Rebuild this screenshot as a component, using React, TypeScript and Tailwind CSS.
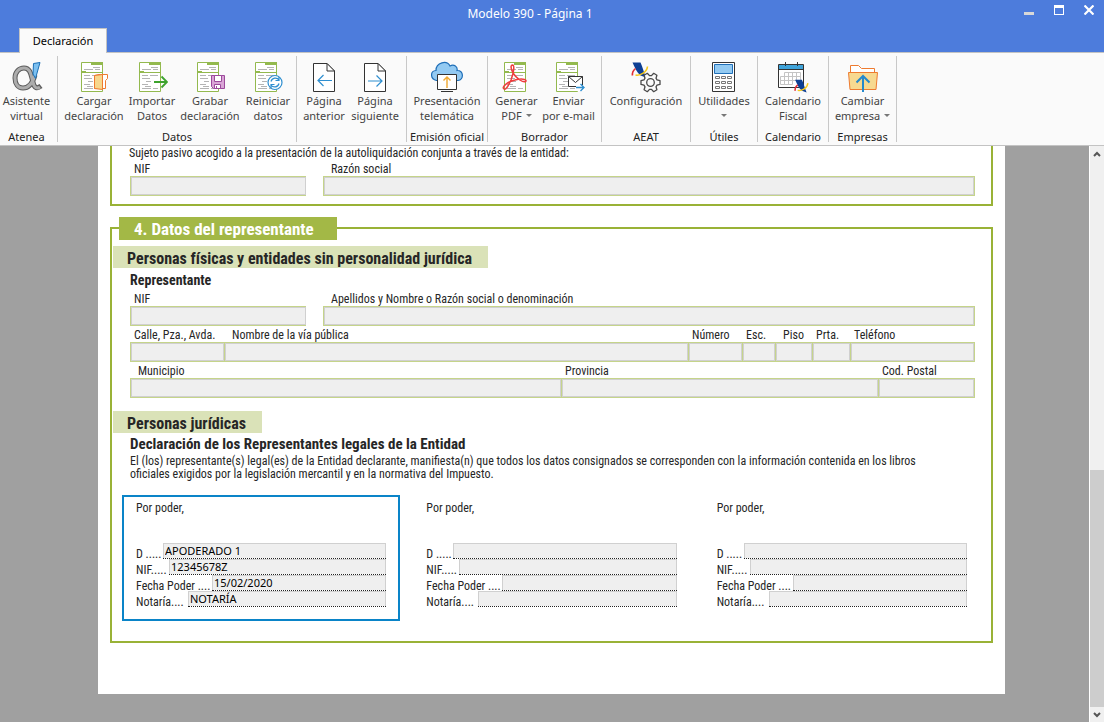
import type { ReactNode } from 'react';

function SheetIcon({ children }: { children?: ReactNode }) {
  return (
    <svg viewBox="0 0 32 32" className="w-8 h-8" fill="none">
      <path d="M3.5 1.5h21v29h-21z" fill="#fff" stroke="#93b94e" />
      <path d="M13 1h12v3H13zM3 10h5v2H3zM3 11h22v1H3z" fill="#93b94e" />
      <path
        d="M15 6.500h7M6 8.500h9M17 8.500h5M6 14.500h6M14 14.500h8M6 17.500h8M10 20.500h5M6 23.500h6M9 25.500h6M6 27.500h9M17 27.500h5"
        stroke="#b4b4b4"
      />
      {children}
    </svg>
  );
}

function AteneaIcon() {
  return (
    <svg viewBox="0 0 32 32" className="w-8 h-8" fill="none">
      <path
        d="M24 14C22 21 19 27 12 27C7 27 4 23 4 17C4 11 8 7 13 7C20 7 20 15 22 21C23 27 26 28 30 25"
        stroke="#5c5c5c"
        strokeWidth="5"
      />
      <path
        d="M24 14C22 21 19 27 12 27C7 27 4 23 4 17C4 11 8 7 13 7C20 7 20 15 22 21C23 27 26 28 29 26"
        stroke="#adadad"
        strokeWidth="3"
      />
      <path d="M22.500 2.500L29 1.500L24.500 17.500L22 13z" fill="#7cc0f0" stroke="#1b6fb5" />
    </svg>
  );
}

function LoadIcon() {
  return (
    <SheetIcon>
      <path d="M16.500 14.500L21 13.500h8.500v4l-2 2v8h-11z" fill="#fff" stroke="#ee7b30" />
      <path d="M16.500 14.500L24.500 13.500v15l-8-1z" fill="#f7d78c" stroke="#ee7b30" />
    </SheetIcon>
  );
}

function ImportIcon() {
  return (
    <SheetIcon>
      <path d="M18 21h13M25.500 15.500l5.500 5.500l-5.500 5.500" stroke="#3da32d" strokeWidth="1.800" />
    </SheetIcon>
  );
}

function SaveIcon() {
  return (
    <SheetIcon>
      <path d="M17.500 14.500h13v13h-11l-2-2z" fill="#d9a5d6" stroke="#9c4a9c" />
      <path d="M20.500 14.500h7v6h-7zM20.500 23.500h6v4h-6z" fill="#fff" stroke="#9c4a9c" />
      <path d="M22 25h1v2h-1z" fill="#9c4a9c" />
    </SheetIcon>
  );
}

function ResetIcon() {
  return (
    <SheetIcon>
      <circle cx="23" cy="21.500" r="7" fill="#fff" stroke="#2f8fd0" strokeWidth="1.200" />
      <path
        d="M19 20.500c1-4 6-4.500 8-1.500M27 16v3.500h-3.500M27 22.500c-1 4-6 4.500-8 1.500M19 27v-3.500h3.500"
        stroke="#2f8fd0"
        strokeWidth="1.200"
      />
    </SheetIcon>
  );
}

function PageIcon({ next }: { next?: boolean }) {
  return (
    <svg viewBox="0 0 32 32" className="w-8 h-8" fill="none">
      <path d="M5.500 2.500h13.500l7.500 7.500v20.500h-21z" fill="#fff" stroke="#333" />
      <path d="M19 2.500v7.500h7.500z" fill="#fff" stroke="#333" />
      {next ? (
        <path d="M9 20h14M17.500 14.500l5.500 5.500l-5.500 5.500" stroke="#2f8fd0" strokeWidth="1.200" />
      ) : (
        <path d="M24 19.500H10M15.500 14l-5.500 5.500l5.500 5.500" stroke="#2f8fd0" strokeWidth="1.200" />
      )}
    </svg>
  );
}

function CloudIcon() {
  return (
    <svg viewBox="0 0 32 32" className="w-8 h-8" fill="none">
      <path
        d="M5.500 19.500C-1 18 -1 10 5 9.500C5 1 16 -1 19 5C23 2.500 27 6 26 9.500C33 9 33 19 27 19.500z"
        fill="#93caf2"
        stroke="#1f6fb8"
        strokeWidth="1.200"
      />
      <path d="M6.500 13.500h19v15h-19z" fill="#fff" stroke="#333" />
      <path d="M10 30.500h12" stroke="#333" />
      <path d="M16 27V16M12.500 19.500l3.500-3.500l3.500 3.500" stroke="#f0a830" strokeWidth="1.400" />
    </svg>
  );
}

function PdfIcon() {
  return (
    <SheetIcon>
      <path
        d="M3 28C0 26 7 20.500 14 19C20 17.500 25.500 18 25 20C23 23 15 17 12 12C9.500 7 9.500 4 11.500 4C14 4.500 12.500 12 10 19C7 26 4.500 29 3 28z"
        stroke="#ee3e3e"
        strokeWidth="1.500"
      />
    </SheetIcon>
  );
}

function MailIcon() {
  return (
    <SheetIcon>
      <path d="M15.500 15.500h14v10h-14z" fill="#fff" stroke="#333" />
      <path d="M15.500 15.500l7 6l7-6" stroke="#333" />
      <path d="M23 24h9v6h-9z" fill="#fff" />
      <path d="M23 26.500h8M27.500 23l3.500 3.500l-3.500 3.500" stroke="#2f8fd0" strokeWidth="1.400" />
    </SheetIcon>
  );
}

function AgencyMark() {
  return (
    <>
      <path d="M2.500 1.500h8c2 4 3 9 5.500 15l-5.500-2C6.500 11 5 7 2.500 1.500z" fill="#0d3f94" />
      <path d="M2.500 14.500c-.5-3 .5-5 3-7" stroke="#e22d33" strokeWidth="1.600" />
      <path d="M5.500 14c5 1 11.500-3 12-8.500" stroke="#f6c81c" strokeWidth="1.600" />
    </>
  );
}

function SettingsIcon() {
  return (
    <svg viewBox="0 0 32 32" className="w-8 h-8" fill="none">
      <AgencyMark />
      <path
        d="M27 18.900L30 19.600V23.400L27 24.100L26 25.800L26.900 28.800L23.700 30.700L21.500 28.400H19.500L17.300 30.700L14.100 28.800L15 25.800L14 24.100L11 23.400V19.600L14 18.900L15 17.200L14.100 14.200L17.300 12.300L19.500 14.600H21.500L23.700 12.300L26.900 14.200L26 17.200z"
        fill="#fafafa"
        stroke="#4a4a4a"
        strokeWidth="1.300"
        strokeLinejoin="round"
      />
      <circle cx="20.500" cy="21.500" r="3.800" stroke="#4a4a4a" strokeWidth="1.300" />
    </svg>
  );
}

function CalculatorIcon() {
  return (
    <svg viewBox="0 0 32 32" className="w-8 h-8" fill="none">
      <path d="M4.500 1.500h22v29h-22z" fill="#fff" stroke="#333" />
      <path d="M6.500 3.500h18v9h-18z" fill="#93caf2" stroke="#1f6fb8" />
      <path
        d="M7.500 15.500h4v2h-4zM13.500 15.500h4v2h-4zM19.500 15.500h4v2h-4zM7.500 20.500h4v2h-4zM13.500 20.500h4v2h-4zM19.500 20.500h4v2h-4zM7.500 25.500h4v2h-4zM13.500 25.500h4v2h-4zM19.500 25.500h4v2h-4z"
        stroke="#777"
      />
    </svg>
  );
}

function CalendarIcon() {
  return (
    <svg viewBox="0 0 32 32" className="w-8 h-8" fill="none">
      <path d="M1.500 3.500h25v23h-25z" fill="#fff" stroke="#333" />
      <path d="M2 4h24v4H2z" fill="#3fa3d9" />
      <path d="M1 8.500h26M8.500 1v4M20.500 1v4" stroke="#333" />
      <path
        d="M7.500 11.500h16v9M3.500 15.500h20M3.500 19.500h20M3.500 23.500h12M3.500 15.500v8M7.500 11.500v12M11.500 11.500v12M15.500 11.500v12M19.500 11.500v8"
        stroke="#c4c4c4"
      />
      <g transform="translate(16 17.500) scale(.85)">
        <AgencyMark />
      </g>
    </svg>
  );
}

function CompanyIcon() {
  return (
    <svg viewBox="0 0 32 32" className="w-8 h-8" fill="none">
      <path d="M3.500 12V4.500h8l3 3h13V12" fill="#fff" stroke="#ee7b30" />
      <path d="M1.500 11.500h29l-1.500 17H3z" fill="#f7d990" stroke="#ee7b30" />
      <path d="M16 31V15M9.500 21.500L16 15l6.500 6.500" stroke="#2489cc" strokeWidth="2" />
    </svg>
  );
}

interface RibbonAction {
  lines: string[];
  icon: ReactNode;
  arrow?: boolean;
}

interface RibbonGroup {
  title: string;
  width: string;
  buttonRow?: string;
  buttonWidth: string;
  actions: RibbonAction[];
}

const groups: RibbonGroup[] = [
  {
    title: 'Atenea',
    width: 'w-[58px] pr-1',
    buttonWidth: 'w-[52px]',
    actions: [{ lines: ['Asistente', 'virtual'], icon: <AteneaIcon /> }],
  },
  {
    title: 'Datos',
    width: 'w-[239px]',
    buttonRow: 'pl-2',
    buttonWidth: 'w-[58px]',
    actions: [
      { lines: ['Cargar', 'declaración'], icon: <LoadIcon /> },
      { lines: ['Importar', 'Datos'], icon: <ImportIcon /> },
      { lines: ['Grabar', 'declaración'], icon: <SaveIcon /> },
      { lines: ['Reiniciar', 'datos'], icon: <ResetIcon /> },
    ],
  },
  {
    title: '',
    width: 'w-[110px] pr-1',
    buttonWidth: 'w-[51px]',
    actions: [
      { lines: ['Página', 'anterior'], icon: <PageIcon /> },
      { lines: ['Página', 'siguiente'], icon: <PageIcon next /> },
    ],
  },
  {
    title: 'Emisión oficial',
    width: 'w-[81px]',
    buttonWidth: 'w-[76px]',
    actions: [{ lines: ['Presentación', 'telemática'], icon: <CloudIcon /> }],
  },
  {
    title: 'Borrador',
    width: 'w-[114px]',
    buttonRow: 'pr-1',
    buttonWidth: 'w-[52px]',
    actions: [
      { lines: ['Generar', 'PDF'], icon: <PdfIcon />, arrow: true },
      { lines: ['Enviar', 'por e-mail'], icon: <MailIcon /> },
    ],
  },
  {
    title: 'AEAT',
    width: 'w-[89px]',
    buttonWidth: 'w-[80px]',
    actions: [{ lines: ['Configuración'], icon: <SettingsIcon /> }],
  },
  {
    title: 'Útiles',
    width: 'w-[67px]',
    buttonWidth: 'w-[60px]',
    actions: [{ lines: ['Utilidades', ''], icon: <CalculatorIcon />, arrow: true }],
  },
  {
    title: 'Calendario',
    width: 'w-[71px]',
    buttonWidth: 'w-[64px]',
    actions: [{ lines: ['Calendario', 'Fiscal'], icon: <CalendarIcon /> }],
  },
  {
    title: 'Empresas',
    width: 'w-[68px]',
    buttonWidth: 'w-[60px]',
    actions: [{ lines: ['Cambiar', 'empresa'], icon: <CompanyIcon />, arrow: true }],
  },
];

function RibbonButton({ action, width }: { action: RibbonAction; width: string }) {
  return (
    <button className={`${width} flex-none flex flex-col items-center text-[#444] hover:bg-[#e8effa]`}>
      {action.icon}
      {action.lines.map((line, i) => (
        <span key={i} className="flex items-center gap-1 whitespace-nowrap leading-[15px] h-[15px]">
          {line}
          {action.arrow && i === 1 && (
            <span className="border-x-3 border-t-3 border-x-transparent border-t-[#777]"></span>
          )}
        </span>
      ))}
    </button>
  );
}

function TitleBar() {
  return (
    <header className="bg-[#4d7cdc] border-b border-[#c3c3c3] h-[53px] flex flex-col justify-between">
      <div className="flex items-start">
        <h1 className="flex-1 pl-9 pt-1 text-center text-white text-xs leading-5">Modelo 390 - Página 1</h1>
        <div className="flex items-center gap-5 pr-[10px] pt-1">
          <button aria-label="Minimizar" className="w-[10px] h-3 flex items-end pb-px">
            <span className="w-full h-[3px] bg-[#d8d8d8]"></span>
          </button>
          <button aria-label="Maximizar" className="w-[10px] h-[10px] border border-t-3 border-white"></button>
          <button aria-label="Cerrar" className="w-[10px] h-3 flex items-center">
            <svg viewBox="0 0 10 10" className="w-[10px] h-[10px]" stroke="#fff" strokeWidth="2.200">
              <path d="M.5.5l9 9M9.500.5l-9 9" />
            </svg>
          </button>
        </div>
      </div>
      <nav className="flex pl-[19px] -mb-px">
        <button className="w-[88px] h-[25px] bg-[#fafafa] border border-b-0 border-[#c3c3c3] text-[11px] text-black">
          Declaración
        </button>
      </nav>
    </header>
  );
}

function Ribbon() {
  return (
    <div className="flex bg-[#fafafa] border-b border-[#c3c3c3] py-[3px] text-[11px]">
      {groups.map((group, i) => (
        <section key={i} className={`${group.width} flex flex-col border-r border-[#c8c8c8] pt-[5px] h-[86px]`}>
          <div className={`${group.buttonRow ?? ''} flex-1 flex justify-center items-start`}>
            {group.actions.map((action) => (
              <RibbonButton key={action.lines.join(' ')} action={action} width={group.buttonWidth} />
            ))}
          </div>
          <h2 className="text-center text-[#222] whitespace-nowrap leading-[11px]">{group.title}</h2>
        </section>
      ))}
    </div>
  );
}

function Field({ id, label, indent = 'pl-1' }: { id: string; label: string; indent?: string }) {
  return (
    <div className="group flex flex-col min-w-0">
      <label htmlFor={id} className={`${indent} leading-[13px] whitespace-nowrap`}>
        {label}
      </label>
      <div className="border-y border-l group-last:border-r border-[#c5d48a]">
        <input id={id} className="block w-full h-[18px] bg-[#efefef] border border-[#d0d0d0] px-1 text-[11px]" />
      </div>
    </div>
  );
}

const proxyFields = [
  { key: 'd', label: 'D .....', width: 'w-[27px]' },
  { key: 'nif', label: 'NIF.....', width: 'w-[33px]' },
  { key: 'fecha', label: 'Fecha Poder ....', width: 'w-[76px]' },
  { key: 'notaria', label: 'Notaría....', width: 'w-[52px]' },
];

function ProxyCard({ index, values, selected }: { index: number; values: string[]; selected?: boolean }) {
  return (
    <div className={`border-2 ${selected ? 'border-[#0a84c8]' : 'border-transparent'} px-3 pt-1 pb-3`}>
      <p className="leading-[14px] pb-[28px]">Por poder,</p>
      {proxyFields.map((field, i) => (
        <div key={field.key} className="flex h-4">
          <label
            htmlFor={`${field.key}-${index}`}
            className={`${field.width} flex-none whitespace-nowrap pt-1 leading-[14px]`}
          >
            {field.label}
          </label>
          <div className="flex-1 min-w-0 border-b border-dotted border-[#222]">
            <input
              id={`${field.key}-${index}`}
              defaultValue={values[i]}
              className="block w-full h-[15px] bg-[#efefef] border border-b-0 border-[#d0d0d0] px-px pb-[2px] text-[11px] text-black font-['Noto_Sans',sans-serif]"
            />
          </div>
        </div>
      ))}
    </div>
  );
}

function Subheading({ children }: { children: ReactNode }) {
  return (
    <h3 className="w-fit bg-[#dae2b8] ml-px pl-[14px] pr-4 pt-[3px] h-[22px] text-base leading-5 font-bold">
      {children}
    </h3>
  );
}

function ScrollBar() {
  return (
    <div className="w-[15px] flex flex-col bg-[#f0f0f0] border-l border-white">
      <button aria-label="Subir" className="h-[15px] flex items-center justify-center">
        <svg viewBox="0 0 8 6" className="w-2 h-[6px]" fill="none" stroke="#555" strokeWidth="2">
          <path d="M1 5l3-3l3 3" />
        </svg>
      </button>
      <div className="flex-1 flex flex-col">
        <div className="flex-[309]"></div>
        <div className="flex-[237] bg-[#cdcdcd]"></div>
      </div>
      <button aria-label="Bajar" className="h-[15px] flex items-center justify-center">
        <svg viewBox="0 0 8 6" className="w-2 h-[6px]" fill="none" stroke="#555" strokeWidth="2">
          <path d="M1 1l3 3l3-3" />
        </svg>
      </button>
    </div>
  );
}

function FormPage() {
  return (
    <div className="bg-white pl-3 pr-3 text-[#262626] text-xs font-['Roboto_Condensed',sans-serif]">
      <section className="border-2 border-t-0 border-[#99b236] pl-4 pr-4 pb-2">
        <p className="pl-px leading-[14px] pb-[3px]">
          Sujeto pasivo acogido a la presentación de la autoliquidación conjunta a través de la entidad:
        </p>
        <div className="grid grid-cols-[176fr_652fr] gap-x-[17px] pl-[2px]">
          <Field id="entidad-nif" label="NIF" />
          <Field id="entidad-razon" label="Razón social" indent="pl-2" />
        </div>
      </section>

      <section className="mt-[21px] border-2 border-[#99b236] pb-5">
        <h2 className="relative -mt-3 ml-[7px] w-[218px] h-[23px] bg-[#a3b846] pl-[15px] text-white text-[17px] leading-[25px] font-bold">
          4. Datos del representante
        </h2>
        <div className="mt-[6px]">
          <Subheading>Personas físicas y entidades sin personalidad jurídica</Subheading>
        </div>
        <div className="pl-[18px] pr-4 flex flex-col gap-[3px]">
          <h4 className="text-sm leading-5 pt-[2px] font-bold">Representante</h4>
          <div className="grid grid-cols-[176fr_652fr] gap-x-[17px]">
            <Field id="rep-nif" label="NIF" />
            <Field id="rep-nombre" label="Apellidos y Nombre o Razón social o denominación" indent="pl-2" />
          </div>
          <div className="grid grid-cols-[94fr_464fr_54fr_33fr_37fr_38fr_125fr]">
            <Field id="rep-calle" label="Calle, Pza., Avda." />
            <Field id="rep-via" label="Nombre de la vía pública" indent="pl-2" />
            <Field id="rep-numero" label="Número" />
            <Field id="rep-esc" label="Esc." />
            <Field id="rep-piso" label="Piso" indent="pl-2" />
            <Field id="rep-prta" label="Prta." />
            <Field id="rep-telefono" label="Teléfono" />
          </div>
          <div className="grid grid-cols-[431fr_317fr_97fr]">
            <Field id="rep-municipio" label="Municipio" indent="pl-2" />
            <Field id="rep-provincia" label="Provincia" />
            <Field id="rep-postal" label="Cod. Postal" />
          </div>
        </div>

        <div className="mt-[13px]">
          <Subheading>Personas jurídicas</Subheading>
        </div>
        <div className="pl-[18px] pr-4">
          <h4 className="text-[15px] leading-[22px] font-bold">Declaración de los Representantes legales de la Entidad</h4>
          <p className="pr-9 leading-[13px]">
            El (los) representante(s) legal(es) de la Entidad declarante, manifiesta(n) que todos los datos consignados se
            corresponden con la información contenida en los libros oficiales exigidos por la legislación mercantil y en
            la normativa del Impuesto.
          </p>
        </div>
        <div className="grid grid-cols-3 gap-3 mt-[14px] mx-[10px]">
          <ProxyCard index={1} values={['APODERADO 1', '12345678Z', '15/02/2020', 'NOTARÍA']} selected />
          <ProxyCard index={2} values={['', '', '', '']} />
          <ProxyCard index={3} values={['', '', '', '']} />
        </div>
      </section>
      <div className="h-[51px]"></div>
    </div>
  );
}

export default function App() {
  return (
    <div className="h-screen flex flex-col font-['Noto_Sans','Open_Sans',sans-serif]">
      <TitleBar />
      <Ribbon />
      <div className="flex-1 min-h-0 flex">
        <main className="flex-1 min-w-0 overflow-hidden bg-[#a0a0a0] pl-[98px] pr-[84px]">
          <FormPage />
        </main>
        <ScrollBar />
      </div>
    </div>
  );
}
